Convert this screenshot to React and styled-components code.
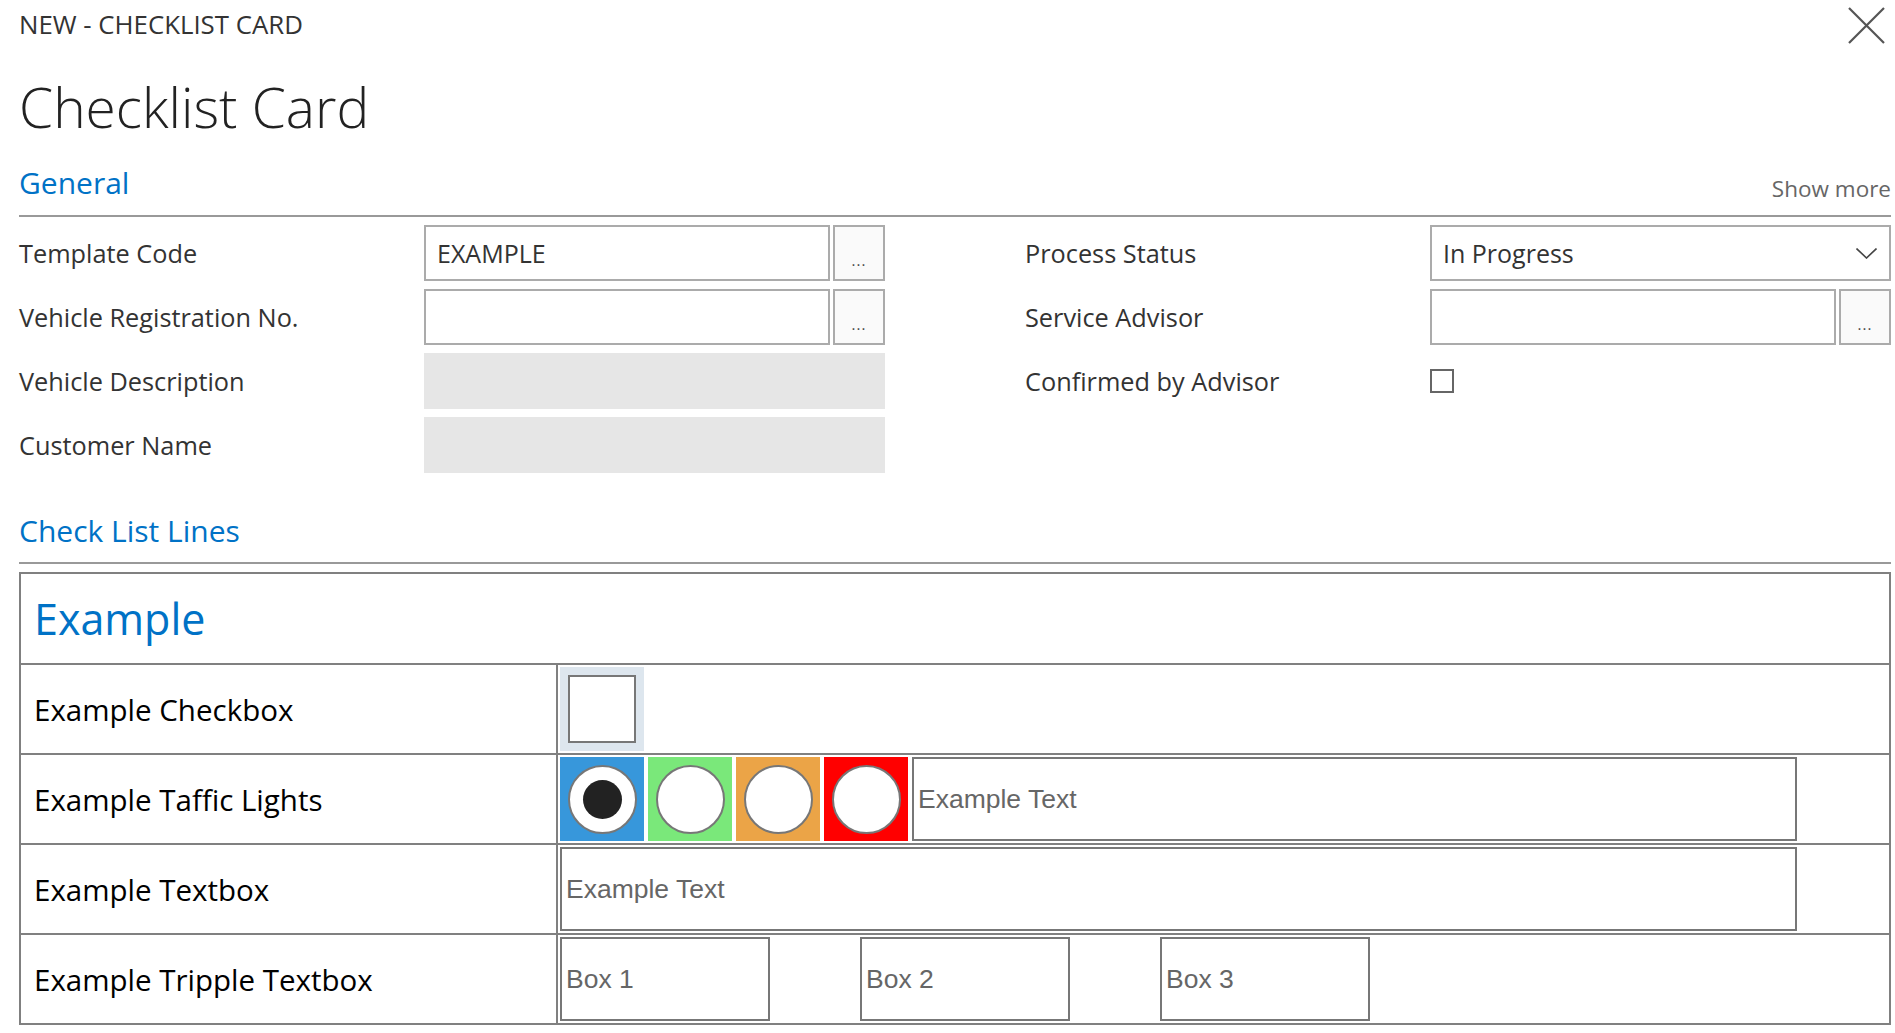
import React from 'react';
import styled, { createGlobalStyle } from 'styled-components';

const GlobalStyle = createGlobalStyle`
  html, body {
    margin: 0;
    padding: 0;
    background: #fff;
  }
  body {
    font-family: "Open Sans", "Noto Sans", sans-serif;
    color: #333;
  }
  * {
    box-sizing: border-box;
  }
`;

const Page = styled.div`
  width: 1895px;
  padding: 0 4px 0 19px;
`;

const TopBar = styled.div`
  display: flex;
  justify-content: space-between;
  align-items: center;
  height: 50px;
`;

const Kicker = styled.span`
  font-size: 25.8px;
  line-height: 1;
  color: #333;
`;

const CloseButton = styled.button`
  display: flex;
  width: 37px;
  height: 37px;
  margin-right: 6px;
  padding: 0;
  border: 0;
  background: none;
  cursor: pointer;
`;

const Title = styled.h1`
  margin: 25px 0 0;
  font-size: 55px;
  font-weight: 300;
  line-height: 64px;
  color: #222;
`;

const SectionHeader = styled.div`
  display: flex;
  justify-content: space-between;
  align-items: baseline;
  margin-top: ${(p) => p.$top}px;
  padding-bottom: ${(p) => p.$pad}px;
  border-bottom: 2px solid #999;
`;

const SectionTitle = styled.h2`
  margin: 0;
  font-size: 30px;
  font-weight: 400;
  line-height: 36px;
  color: #0072c6;
`;

const ShowMore = styled.span`
  font-size: 22.5px;
  line-height: 36px;
  color: #666;
  position: relative;
  top: 3px;
`;

const FormGrid = styled.div`
  display: grid;
  grid-template-columns: 1fr 1fr;
  column-gap: 140px;
  margin-top: 8px;
`;

const FormColumn = styled.div`
  display: flex;
  flex-direction: column;
  gap: 8px;
`;

const FieldRow = styled.div`
  display: grid;
  grid-template-columns: 405px 1fr;
  align-items: center;
  height: 56px;
`;

const Label = styled.span`
  font-size: 25.3px;
  color: #333;
`;

const Field = styled.div`
  display: flex;
  gap: 3px;
  height: 56px;
`;

const Input = styled.div`
  flex: 1;
  display: flex;
  align-items: center;
  justify-content: space-between;
  padding: 0 12px 0 11px;
  border: 2px solid #ababab;
  background: #fff;
  font-size: 25px;
  color: #333;
`;

const LookupButton = styled.div`
  width: 52px;
  display: flex;
  align-items: flex-end;
  justify-content: center;
  padding-bottom: 11px;
  border: 2px solid #ababab;
  background: #fafafa;
  font-size: 15px;
  line-height: 1;
  color: #444;
  letter-spacing: 1px;
`;

const ReadOnly = styled.div`
  height: 56px;
  background: #e6e6e6;
`;

const FormCheck = styled.div`
  width: 24px;
  height: 24px;
  border: 2px solid #666;
  background: #fff;
`;

const Table = styled.div`
  margin-top: 8px;
  border: 2px solid #808080;
`;

const GroupRow = styled.div`
  display: flex;
  align-items: center;
  height: 89px;
  padding-left: 13px;
  font-size: 43px;
  color: #0072c6;
`;

const LineRow = styled.div`
  display: grid;
  grid-template-columns: 537px 1fr;
  height: 90px;
  border-top: 2px solid #808080;
`;

const LineLabel = styled.div`
  display: flex;
  align-items: center;
  padding-left: 13px;
  border-right: 2px solid #808080;
  font-size: 29.5px;
  color: #000;
`;

const LineContent = styled.div`
  display: flex;
  align-items: center;
  gap: ${(p) => p.$gap || 4}px;
  padding: 0 2px;
`;

const CheckTile = styled.div`
  display: flex;
  align-items: center;
  justify-content: center;
  width: 84px;
  height: 84px;
  background: #dde6ee;
`;

const CheckBox = styled.div`
  width: 68px;
  height: 68px;
  border: 2px solid #777;
  background: #fff;
`;

const LightTile = styled.div`
  display: flex;
  align-items: center;
  justify-content: center;
  width: 84px;
  height: 84px;
  background: ${(p) => p.$color};
`;

const Lamp = styled.div`
  display: flex;
  align-items: center;
  justify-content: center;
  width: 69px;
  height: 69px;
  border: 2px solid #777;
  border-radius: 50%;
  background: #fff;
`;

const LampDot = styled.div`
  width: 39px;
  height: 39px;
  border-radius: 50%;
  background: #222;
`;

const TextBox = styled.div`
  display: flex;
  align-items: center;
  width: ${(p) => p.$width}px;
  height: 84px;
  padding-left: 4px;
  border: 2px solid #777;
  font-family: "Liberation Sans", Arial, sans-serif;
  font-size: 26.5px;
  color: #666;
`;

const lights = [
  { color: '#3797db', on: true },
  { color: '#7ae87a', on: false },
  { color: '#eba447', on: false },
  { color: '#ff0000', on: false },
];

const CloseIcon = () => (
  <svg width="37" height="37" viewBox="0 0 37 37">
    <path d="M1 1 L36 36 M36 1 L1 36" stroke="#555" strokeWidth="2.2" fill="none" />
  </svg>
);

const Chevron = () => (
  <svg width="21" height="11" viewBox="0 0 21 11">
    <path d="M0.5 0.5 L10.5 10 L20.5 0.5" stroke="#444" strokeWidth="1.6" fill="none" />
  </svg>
);

const App = () => (
  <Page>
    <GlobalStyle />
    <TopBar>
      <Kicker>NEW - CHECKLIST CARD</Kicker>
      <CloseButton aria-label="Close"><CloseIcon /></CloseButton>
    </TopBar>
    <Title>Checklist Card</Title>

    <SectionHeader $top={26} $pad={11}>
      <SectionTitle>General</SectionTitle>
      <ShowMore>Show more</ShowMore>
    </SectionHeader>

    <FormGrid>
      <FormColumn>
        <FieldRow>
          <Label>Template Code</Label>
          <Field>
            <Input>EXAMPLE</Input>
            <LookupButton>...</LookupButton>
          </Field>
        </FieldRow>
        <FieldRow>
          <Label>Vehicle Registration No.</Label>
          <Field>
            <Input />
            <LookupButton>...</LookupButton>
          </Field>
        </FieldRow>
        <FieldRow>
          <Label>Vehicle Description</Label>
          <ReadOnly />
        </FieldRow>
        <FieldRow>
          <Label>Customer Name</Label>
          <ReadOnly />
        </FieldRow>
      </FormColumn>
      <FormColumn>
        <FieldRow>
          <Label>Process Status</Label>
          <Field>
            <Input>
              In Progress
              <Chevron />
            </Input>
          </Field>
        </FieldRow>
        <FieldRow>
          <Label>Service Advisor</Label>
          <Field>
            <Input />
            <LookupButton>...</LookupButton>
          </Field>
        </FieldRow>
        <FieldRow>
          <Label>Confirmed by Advisor</Label>
          <FormCheck />
        </FieldRow>
      </FormColumn>
    </FormGrid>

    <SectionHeader $top={40} $pad={13}>
      <SectionTitle>Check List Lines</SectionTitle>
    </SectionHeader>

    <Table>
      <GroupRow>Example</GroupRow>
      <LineRow>
        <LineLabel>Example Checkbox</LineLabel>
        <LineContent>
          <CheckTile><CheckBox /></CheckTile>
        </LineContent>
      </LineRow>
      <LineRow>
        <LineLabel>Example Taffic Lights</LineLabel>
        <LineContent>
          {lights.map((l) => (
            <LightTile key={l.color} $color={l.color}>
              <Lamp>{l.on && <LampDot />}</Lamp>
            </LightTile>
          ))}
          <TextBox $width={885}>Example Text</TextBox>
        </LineContent>
      </LineRow>
      <LineRow>
        <LineLabel>Example Textbox</LineLabel>
        <LineContent>
          <TextBox $width={1237}>Example Text</TextBox>
        </LineContent>
      </LineRow>
      <LineRow>
        <LineLabel>Example Tripple Textbox</LineLabel>
        <LineContent $gap={90}>
          <TextBox $width={210}>Box 1</TextBox>
          <TextBox $width={210}>Box 2</TextBox>
          <TextBox $width={210}>Box 3</TextBox>
        </LineContent>
      </LineRow>
    </Table>
  </Page>
);

export default App;
